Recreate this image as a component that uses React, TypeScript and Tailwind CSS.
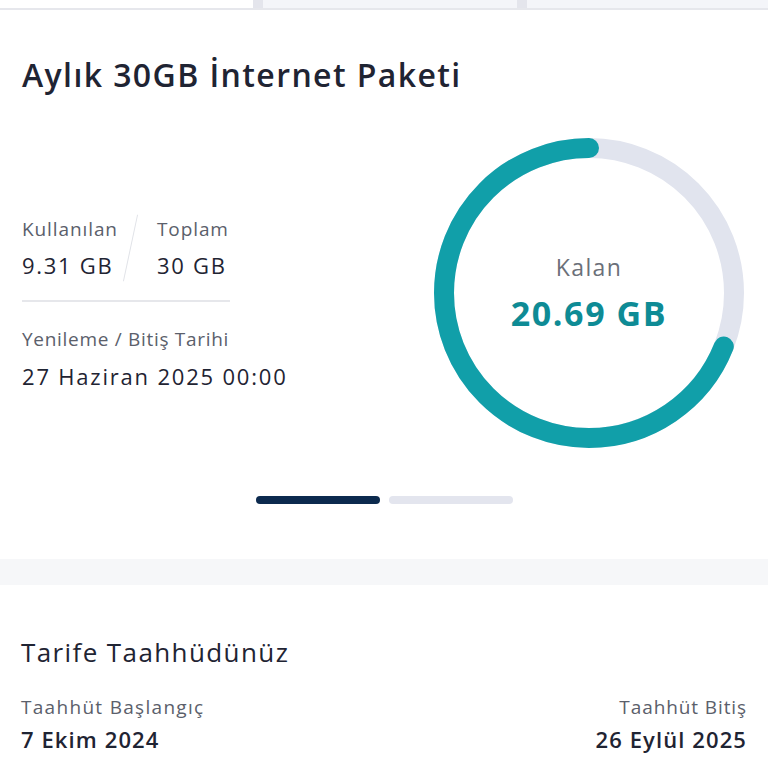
import React from 'react';

const font = { fontFamily: '"Open Sans", "Noto Sans", sans-serif' };

// Ring showing remaining quota; teal runs counter-clockwise from the top
const UsageRing: React.FC<{ remaining: number; total: number }> = ({ remaining, total }) => {
    const r = 145;
    const c = 2 * Math.PI * r;
    const frac = remaining / total;
    return (
        <div className="relative w-[310px] h-[310px]">
            <svg width="310" height="310" viewBox="0 0 310 310" className="absolute inset-0">
                <circle cx="155" cy="155" r={r} fill="none" stroke="#e1e4ee" strokeWidth="20" />
                <circle
                    cx="155"
                    cy="155"
                    r={r}
                    fill="none"
                    stroke="#119fa9"
                    strokeWidth="20"
                    strokeLinecap="round"
                    strokeDasharray={`${c * frac} ${c}`}
                    transform="translate(310 0) scale(-1 1) rotate(-90 155 155)"
                />
            </svg>
            <div className="absolute inset-0 flex flex-col items-center justify-center">
                <div className="text-[23px] tracking-[1.4px] text-[#6b7079] leading-none mb-[17px]">Kalan</div>
                <div className="text-[34px] tracking-[1.6px] font-bold text-[#0e8b95] leading-none">20.69 GB</div>
            </div>
        </div>
    );
};

export default function App() {
    return (
        <div className="w-[768px] h-[768px] bg-white overflow-hidden" style={font}>
            {/* Tab strip peeking from above */}
            <div className="flex h-[8px] bg-[#e4e5ec]">
                <div className="w-[253px] bg-white" />
                <div className="w-[254px] ml-[10px] bg-[#f4f5f9]" />
                <div className="flex-1 ml-[10px] bg-[#f4f5f9]" />
            </div>
            <div className="h-[2px] bg-[#e6e7ec]" />

            {/* Package card */}
            <div className="px-[22px] pt-[49px]">
                <h1 className="text-[32px] tracking-[1.4px] font-semibold text-[#1f2433] leading-none">Aylık 30GB İnternet Paketi</h1>
                <div className="flex items-center justify-between mt-[47px] -mr-[2px]">
                    <div className="w-[300px] pt-[20px]">
                        <div className="flex items-stretch w-[208px]">
                            <div className="flex flex-col w-[108px]">
                                <span className="text-[19px] tracking-[0.9px] text-[#5b606b] leading-none">Kullanılan</span>
                                <span className="text-[22px] tracking-[1.7px] text-[#1f2433] leading-none mt-[15px]">9.31 GB</span>
                            </div>
                            <div className="w-[1px] bg-[#e1e3e8] mr-[26px] rotate-[12deg] -my-[6px]" />
                            <div className="flex flex-col">
                                <span className="text-[19px] tracking-[0.9px] text-[#5b606b] leading-none">Toplam</span>
                                <span className="text-[22px] tracking-[1.7px] text-[#1f2433] leading-none mt-[15px]">30 GB</span>
                            </div>
                        </div>
                        <div className="h-[2px] w-[208px] bg-[#e6e7eb] mt-[24px]" />
                        <div className="text-[19px] tracking-[0.7px] text-[#5b606b] leading-none mt-[28px]">Yenileme / Bitiş Tarihi</div>
                        <div className="text-[22px] tracking-[1.8px] text-[#1f2433] leading-none mt-[16px]">27 Haziran 2025 00:00</div>
                    </div>
                    <div className="mr-[4px]">
                        <UsageRing remaining={20.69} total={30} />
                    </div>
                </div>
                <div className="flex justify-center gap-[9px] mt-[48px]">
                    <div className="w-[124px] h-[8px] rounded-full bg-[#0c2a4e]" />
                    <div className="w-[124px] h-[8px] rounded-full bg-[#e3e5ee]" />
                </div>
            </div>

            <div className="h-[26px] bg-[#f6f7f9] mt-[55px]" />

            {/* Commitment */}
            <div className="px-[21px] pt-[54px]">
                <h2 className="text-[26px] tracking-[1.4px] text-[#1f2433] leading-none">Tarife Taahhüdünüz</h2>
                <div className="flex justify-between mt-[33px]">
                    <div className="flex flex-col">
                        <span className="text-[19px] tracking-[1.3px] text-[#5b606b] leading-none">Taahhüt Başlangıç</span>
                        <span className="text-[22px] tracking-[1.1px] font-semibold text-[#1f2433] leading-none mt-[11px]">7 Ekim 2024</span>
                    </div>
                    <div className="flex flex-col items-end">
                        <span className="text-[19px] tracking-[0.9px] text-[#5b606b] leading-none">Taahhüt Bitiş</span>
                        <span className="text-[22px] tracking-[1.1px] font-semibold text-[#1f2433] leading-none mt-[11px]">26 Eylül 2025</span>
                    </div>
                </div>
            </div>
        </div>
    );
}
